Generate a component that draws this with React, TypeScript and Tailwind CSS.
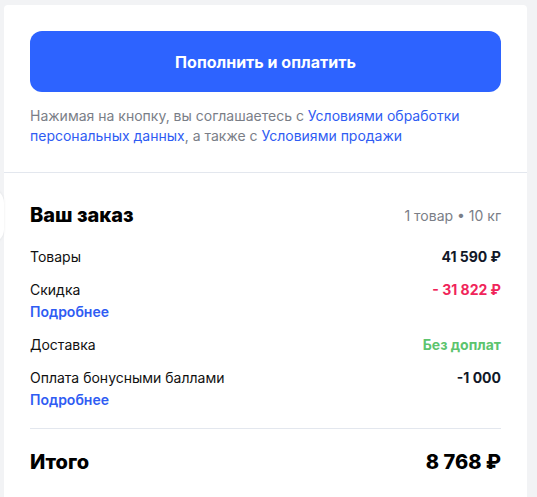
export default function App() {
    const rows = [
        { label: 'Товары', value: '41 590 ₽', tone: 'text-[#111827]' },
        { label: 'Скидка', value: '- 31 822 ₽', tone: 'text-[#f0245a]', more: true },
        { label: 'Доставка', value: 'Без доплат', tone: 'text-[#5cc46e]' },
        { label: 'Оплата бонусными баллами', value: '-1 000', tone: 'text-[#111827]', more: true },
    ];

    return (
        <div
            className="relative min-h-screen bg-[#f2f3f5] pt-[5px] pl-[4px] pr-[10px] overflow-hidden"
            style={{ fontFamily: 'Inter, "Noto Sans", sans-serif' }}
        >
            {/* edge of a neighbouring round element peeking in */}
            <div className="absolute left-[-26px] top-[188px] w-[30px] h-[56px] rounded-full bg-white shadow-[0_0_3px_rgba(0,0,0,0.08)]" />

            <div className="bg-white rounded-t-[4px] min-h-[492px]">
                <div className="px-[26px] pt-[26px] pb-[26px] border-b border-[#e3e7ee]">
                    <button className="w-full h-[61px] rounded-[12px] bg-[#2d63ff] text-white text-[16px] font-bold">
                        Пополнить и оплатить
                    </button>
                    <p className="mt-[14px] text-[14px] leading-[20px] text-[#7a7e87]">
                        Нажимая на кнопку, вы соглашаетесь с{' '}
                        <span className="text-[#2f5cf3]">Условиями обработки персональных данных</span>, а также с{' '}
                        <span className="text-[#2f5cf3]">Условиями продажи</span>
                    </p>
                </div>

                <div className="px-[26px] pt-[28px]">
                    <div className="flex items-center justify-between">
                        <h2 className="text-[20px] leading-[28px] font-extrabold text-black">Ваш заказ</h2>
                        <span className="text-[14px] text-[#7a7e87]">1 товар • 10 кг</span>
                    </div>

                    <div className="mt-[18px] flex flex-col gap-[13px] pb-[18px] border-b border-[#e3e7ee]">
                        {rows.map((row) => (
                            <div key={row.label}>
                                <div className="flex items-center justify-between text-[14px] leading-[20px]">
                                    <span className="text-[#111]">{row.label}</span>
                                    <span className={`font-bold ${row.tone}`}>{row.value}</span>
                                </div>
                                {row.more && (
                                    <div className="mt-[2px] text-[14px] leading-[20px] font-semibold text-[#2f5cf3]">
                                        Подробнее
                                    </div>
                                )}
                            </div>
                        ))}
                    </div>

                    <div className="mt-[19px] flex items-center justify-between text-[20px] leading-[28px] font-extrabold text-black">
                        <span>Итого</span>
                        <span>8 768 ₽</span>
                    </div>
                </div>
            </div>
        </div>
    );
}
